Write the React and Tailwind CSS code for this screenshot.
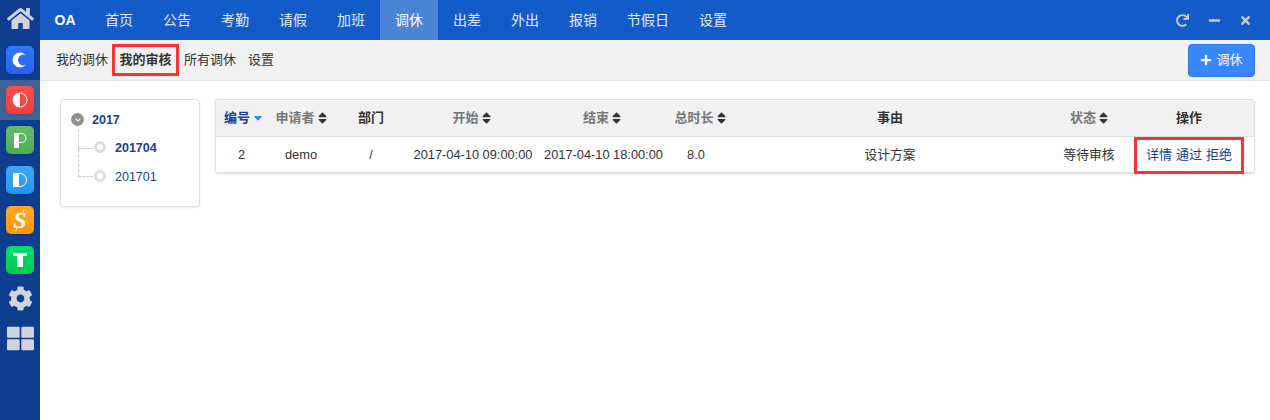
import { FaHome, FaCog, FaThLarge, FaRedo, FaMinus, FaTimes, FaPlus, FaSort, FaSortDown, FaChevronDown } from "react-icons/fa";

const navItems = ["首页", "公告", "考勤", "请假", "加班", "调休", "出差", "外出", "报销", "节假日", "设置"];

const columns = [
  { label: "编号", sort: "active", width: "w-[55px]", value: "2", valueClass: "pr-[4px]" },
  { label: "申请者", sort: "both", width: "w-[60px]", value: "demo" },
  { label: "部门", width: "w-[80px]", value: "/" },
  { label: "开始", sort: "both", width: "w-[123px]", value: "2017-04-10 09:00:00", valueClass: "pl-[1px]", labelClass: "pr-[2px]" },
  { label: "结束", sort: "both", width: "w-[136px]", value: "2017-04-10 18:00:00", valueClass: "pl-[3px]" },
  { label: "总时长", sort: "both", width: "w-[56px]", value: "8.0", valueClass: "pr-[4px]", labelClass: "pl-[4px]" },
  { label: "事由", width: "w-[328px]", value: "设计方案" },
  { label: "状态", sort: "both", width: "w-[70px]", value: "等待审核" },
];

const AppIcon = ({ bg, children }) => (
  <div className={`w-7 h-7 rounded-[5px] shadow-sm ${bg}`}>
    <svg width="28" height="28" viewBox="0 0 28 28">{children}</svg>
  </div>
);

const SideRow = ({ active, className = "", children }) => (
  <div className={`h-10 flex items-center justify-center ${active ? "bg-[#3f6299]" : ""} ${className}`}>{children}</div>
);

const Sidebar = () => (
  <div className="w-10 shrink-0 bg-[#0f3d8f]">
    <SideRow className="pb-[3px]">
      <FaHome className="text-[#cfd4de] text-[27px]" />
    </SideRow>
    <SideRow>
      <AppIcon bg="bg-gradient-to-b from-[#2f76ff] to-[#2a62f0]">
        <circle cx="14" cy="14" r="7.5" fill="#fff" />
        <circle cx="17.5" cy="14" r="5.5" fill="#2d6cf8" />
      </AppIcon>
    </SideRow>
    <SideRow active>
      <AppIcon bg="bg-gradient-to-b from-[#f4504c] to-[#f53d3d]">
        <circle cx="14" cy="14" r="7" fill="none" stroke="#fff" strokeWidth="1" />
        <path d="M14 7a7 7 0 0 0 0 14z" fill="#fff" />
      </AppIcon>
    </SideRow>
    <SideRow>
      <AppIcon bg="bg-gradient-to-b from-[#66bb6a] to-[#4caf50]">
        <rect x="8" y="7" width="5" height="15" fill="#fff" />
        <path d="M13 7.5h2.5a4.5 4.5 0 0 1 0 9H13" fill="none" stroke="#fff" strokeWidth="1" />
      </AppIcon>
    </SideRow>
    <SideRow>
      <AppIcon bg="bg-gradient-to-b from-[#42a5f5] to-[#2196f3]">
        <rect x="7" y="7" width="6" height="14" fill="#fff" />
        <path d="M13 7.5h1a6.5 6.5 0 0 1 0 13h-1" fill="none" stroke="#fff" strokeWidth="1" />
      </AppIcon>
    </SideRow>
    <SideRow>
      <AppIcon bg="bg-gradient-to-b from-[#ffa726] to-[#ff9800]">
        <text x="14" y="21.5" textAnchor="middle" fontSize="24" fontWeight="700" fontStyle="italic" fontFamily="'Liberation Serif', serif" fill="#fff">S</text>
        <path d="M18 3.5l-1 3M11 21.5l-1 3" stroke="#fff" strokeWidth="1" />
      </AppIcon>
    </SideRow>
    <SideRow>
      <AppIcon bg="bg-gradient-to-b from-[#00dc6e] to-[#00c853]">
        <rect x="7" y="7" width="14" height="3" fill="#fff" />
        <rect x="11" y="7" width="6" height="14" fill="#fff" />
      </AppIcon>
    </SideRow>
    <SideRow className="pb-[4px]">
      <FaCog className="text-[#cfd4de] text-[25px]" />
    </SideRow>
    <SideRow className="pb-[4px]">
      <FaThLarge className="text-[#cfd4de] text-[27px]" />
    </SideRow>
  </div>
);

const TopBar = () => (
  <div className="h-10 bg-[#135bc9] flex items-center text-white text-[14px]">
    <div className="w-[50px] text-center font-bold text-[14px]">OA</div>
    {navItems.map((item) => (
      <div
        key={item}
        className={`h-10 flex items-center px-[15px] text-[#e3ebf8] ${item === "调休" ? "bg-[#4a84d6] text-white" : ""}`}
      >
        {item}
      </div>
    ))}
    <div className="ml-auto flex items-center pr-[10px] text-[#c8ccd2] text-[13px]">
      <div className="w-8 flex justify-center"><FaRedo /></div>
      <div className="w-8 flex justify-center"><FaMinus /></div>
      <div className="w-[30px] flex justify-center"><FaTimes /></div>
    </div>
  </div>
);

const SubBar = () => (
  <div className="h-[41px] bg-[#f1f1f1] border-b border-[#e2e2e2] flex items-center pl-[16px] pr-[15px] text-[13px] text-[#333]">
    <span>我的调休</span>
    <span className="ml-[4px] w-[67px] h-[32px] flex items-center justify-center border-[3px] border-[#f33535] font-bold box-border">我的审核</span>
    <span className="ml-[5px]">所有调休</span>
    <span className="ml-[12px]">设置</span>
    <button className="ml-auto w-[67px] h-[33px] bg-[#3a87fd] border border-[#2f78ee] rounded-[4px] text-white flex items-center justify-center gap-[4px]">
      <FaPlus className="text-[12px]" />
      调休
    </button>
  </div>
);

const Tree = () => (
  <div className="w-[140px] h-[108px] shrink-0 border border-[#dedede] rounded-[4px] shadow-[0_1px_2px_rgba(0,0,0,0.08)] text-[12.5px] font-bold text-[#153f96] relative">
    <div className="absolute left-[10px] top-[13px] w-[13px] h-[13px] rounded-full bg-[#919191] flex items-center justify-center">
      <FaChevronDown className="text-white text-[6px]" />
    </div>
    <div className="absolute left-[31px] top-[11px]">2017</div>
    <div className="absolute left-[17px] top-[29px] w-[15px] h-[20px] border-l border-b border-dashed border-[#c8c8c8]" />
    <div className="absolute left-[17px] top-[49px] w-[15px] h-[28px] border-l border-b border-dashed border-[#c8c8c8]" />
    <div className="absolute left-[33px] top-[41px] w-[12px] h-[12px] rounded-full border-[3px] border-[#dddddd] bg-white" />
    <div className="absolute left-[54px] top-[39px]">201704</div>
    <div className="absolute left-[33px] top-[70px] w-[12px] h-[12px] rounded-full border-[3px] border-[#dddddd] bg-white" />
    <div className="absolute left-[54px] top-[68px] font-normal">201701</div>
  </div>
);

const SortIcon = ({ sort }) => {
  if (sort === "active") return <FaSortDown className="text-[#3a87fd] w-[10px] h-[14px] -mt-[6px]" />;
  if (sort === "both") return <FaSort className="text-[#333] w-[9px] h-[14px]" />;
  return null;
};

const Table = () => (
  <div className="w-[1040px] h-[74px] border border-[#e2e2e2] border-t-[#dcdcdc] rounded-[3px] shadow-[0_1px_2px_rgba(0,0,0,0.15)] text-[12.8px]">
    <div className="h-[37px] bg-[#f1f1f1] border-b border-[#dedede] flex items-center font-bold text-[13px]">
      {columns.map((col) => (
        <div
          key={col.label}
          className={`${col.width} ${col.labelClass || ""} flex items-center justify-center gap-[3px] whitespace-nowrap ${
            col.sort === "active" ? "text-[#153f96]" : col.sort ? "text-[#777]" : "text-[#333]"
          }`}
        >
          {col.label}
          <SortIcon sort={col.sort} />
        </div>
      ))}
      <div className="w-[130px] text-center text-[#333]">操作</div>
    </div>
    <div className="h-[36px] flex items-center text-[#333]">
      {columns.map((col) => (
        <div key={col.label} className={`${col.width} ${col.valueClass || ""} text-center whitespace-nowrap`}>
          {col.value}
        </div>
      ))}
      <div className="w-[130px] flex justify-center">
        <div className="w-[110px] h-[37px] shrink-0 border-[3px] border-[#f33535] flex items-center justify-center gap-[4px] text-[13px] text-[#153f96]">
          <span>详情</span>
          <span>通过</span>
          <span>拒绝</span>
        </div>
      </div>
    </div>
  </div>
);

export default function App() {
  return (
    <div className="w-[1270px] h-[420px] flex overflow-hidden bg-white font-['Liberation_Sans','Noto_Sans_CJK_SC',sans-serif]">
      <Sidebar />
      <div className="flex-1 flex flex-col">
        <TopBar />
        <SubBar />
        <div className="flex items-start gap-[15px] pl-[20px] pt-[18px]">
          <Tree />
          <Table />
        </div>
      </div>
    </div>
  );
}
